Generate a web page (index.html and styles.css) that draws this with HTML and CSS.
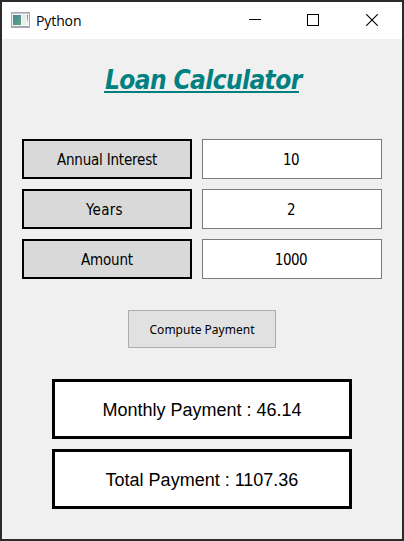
FILE: index.html
```html
<!DOCTYPE html>
<html lang="en">
<head>
<meta charset="utf-8">
<title>Python</title>
<link rel="stylesheet" href="styles.css">
</head>
<body>
<div class="window">
  <header class="titlebar">
    <svg class="app-icon" width="19" height="16" viewBox="0 0 19 16">
      <defs>
        <linearGradient id="pane" x1="0" y1="0" x2="1" y2="1"><stop offset="0" stop-color="#4b7fa5"/><stop offset="1" stop-color="#58ad72"/></linearGradient>
        <linearGradient id="side" x1="0" y1="0" x2="0" y2="1"><stop offset="0" stop-color="#4b80a0"/><stop offset="1" stop-color="#b5e2bb"/></linearGradient>
      </defs>
      <rect width="19" height="16" fill="#a5a8b0"/>
      <rect x="1" y="1" width="17" height="1" fill="#c4c7cd"/>
      <rect x="1" y="2" width="17" height="12" fill="#f4f5f6"/>
      <rect x="2" y="3" width="8" height="10" fill="url(#pane)"/>
      <rect x="11" y="3" width="4" height="10" fill="#e9edee"/>
      <rect x="16" y="3" width="1" height="7" fill="url(#side)"/>
    </svg>
    <span class="caption">Python</span>
    <div class="controls">
      <svg width="12" height="12" viewBox="0 0 12 12" shape-rendering="crispEdges"><rect y="5" width="12" height="1"/></svg>
      <svg width="12" height="12" viewBox="0 0 12 12" shape-rendering="crispEdges"><rect x=".5" y=".5" width="11" height="11" fill="none" stroke="#000"/></svg>
      <svg class="close" width="12" height="12" viewBox="0 0 12 12"><path d="M.3.3 11.7 11.7M11.7.3.3 11.7" stroke="#000" stroke-width="1.1"/></svg>
    </div>
  </header>
  <main class="content">
    <h1 class="heading"><span class="heading-text">Loan Calculator</span></h1>
    <div class="form">
      <div class="label"><span class="interest">Annual Interest</span></div><div class="field">10</div>
      <div class="label"><span class="years">Years</span></div><div class="field">2</div>
      <div class="label"><span class="amount">Amount</span></div><div class="field">1000</div>
    </div>
    <button class="compute">Compute Payment</button>
    <div class="results">
      <div class="result">Monthly Payment : 46.14</div>
      <div class="result">Total Payment : 1107.36</div>
    </div>
  </main>
</div>
</body>
</html>
```
FILE: styles.css
```css
* { box-sizing: border-box; }
body {
  margin: 0;
  width: 404px;
  height: 541px;
  padding: 2px;
  background: #2b2b2b;
  color: #000;
  font-family: "DejaVu Sans Condensed", "DejaVu Sans", sans-serif;
}
.window { width: 400px; height: 537px; background: #f0f0f0; }
.titlebar {
  display: flex;
  align-items: center;
  height: 37px;
  padding: 0 24px 0 9px;
  background: #fff;
}
.app-icon { margin-top: -1px; }
.caption { margin-left: 6px; font: 14px/20px "Open Sans", sans-serif; letter-spacing: -0.1px; }
.controls { display: flex; gap: 46px; margin-left: auto; margin-top: -1px; }
.close { margin-left: 1px; }
.content {
  display: flex;
  flex-direction: column;
  align-items: center;
  height: 500px;
}
.heading {
  margin: 21px 1px 0 0;
  height: 33px;
  width: 195px;
  border-bottom: 2px solid #008080;
  color: #008080;
  font-size: 26px;
  line-height: 41px;
  font-style: italic;
  font-weight: 700;
  letter-spacing: -0.6px;
  white-space: nowrap;
}
.heading-text { margin-left: 1px; }
.form {
  display: grid;
  grid-template-columns: 170px 180px;
  grid-auto-rows: 40px;
  gap: 10px;
  margin-top: 46px;
}
.label, .field {
  display: flex;
  align-items: center;
  justify-content: center;
  padding-top: 2px;
  font-size: 15px;
  white-space: nowrap;
}
.label { border: 2px solid #000; background: #d9d9d9; letter-spacing: -0.2px; }
.years { margin-right: 5px; letter-spacing: 0.3px; }
.field { padding-right: 2px; border: 1px solid #7a7a7a; background: #fff; letter-spacing: -0.5px; }
.compute {
  width: 148px;
  height: 38px;
  margin: 31px 0 0;
  padding: 0;
  border: 1px solid #adadad;
  background: #e1e1e1;
  color: #000;
  font: 12px "Noto Sans", sans-serif;
}
.results { display: grid; gap: 10px; margin-top: 31px; }
.result {
  display: flex;
  align-items: center;
  justify-content: center;
  width: 300px;
  height: 60px;
  padding-top: 2px;
  border: 3px solid #000;
  background: #fff;
  font: 18px "Liberation Sans", sans-serif;
}
```
